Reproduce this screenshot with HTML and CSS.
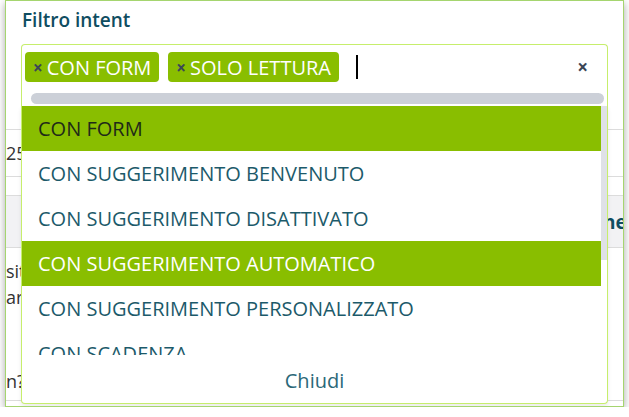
FILE: index.html
```html
<!DOCTYPE html>
<html lang="it">
<head>
<meta charset="utf-8">
<title>Filtro intent</title>
<link rel="stylesheet" href="styles.css">
</head>
<body>
<div class="modal">
  <h2 class="title">Filtro intent</h2>
  <div class="select">
    <div class="control">
      <div class="tags">
        <span class="tag"><span class="tag-x">×</span>CON FORM</span>
        <span class="tag"><span class="tag-x">×</span>SOLO LETTURA</span>
        <span class="caret"></span>
        <span class="clear">×</span>
      </div>
      <div class="hscroll"></div>
    </div>
    <div class="dropdown">
      <div class="list">
        <div class="options">
          <div class="opt selected">CON FORM</div>
          <div class="opt">CON SUGGERIMENTO BENVENUTO</div>
          <div class="opt">CON SUGGERIMENTO DISATTIVATO</div>
          <div class="opt hover">CON SUGGERIMENTO AUTOMATICO</div>
          <div class="opt">CON SUGGERIMENTO PERSONALIZZATO</div>
          <div class="opt">CON SCADENZA</div>
        </div>
        <div class="vscroll"><div class="thumb"></div></div>
      </div>
      <div class="footer">Chiudi</div>
    </div>
  </div>
  <div class="behind">
    <div class="pager"><span>25</span></div>
    <div class="thead"><span class="th">Azione</span></div>
    <div class="row r1">sito</div>
    <div class="row r2">area</div>
    <div class="row r3">n?</div>
  </div>
</div>
</body>
</html>
```

FILE: styles.css
```css
html, body {
  margin: 0;
  padding: 0;
  background: #fff;
  font-family: "Open Sans", "Noto Sans", sans-serif;
}
.modal {
  position: relative;
  margin-left: 5px;
  width: 619px;
  height: 407px;
  box-sizing: border-box;
  border: 1px solid #a5d56f;
  background: #fff;
  box-shadow: 0 3px 8px rgba(0, 0, 0, 0.35);
  overflow: hidden;
}
.title {
  margin: 0;
  padding: 6px 16px 0;
  font-size: 19px;
  line-height: 26px;
  font-weight: 600;
  color: #0f4d61;
}
.select {
  position: relative;
  margin: 11px 15px 0;
  z-index: 2;
}
.control {
  border: 1px solid #c6ee6c;
  border-bottom: none;
  border-radius: 4px 4px 0 0;
  padding: 7px 3px 2px 3px;
  background: #fff;
}
.tags {
  display: flex;
  align-items: center;
  height: 30px;
}
.tag {
  display: flex;
  align-items: center;
  height: 30px;
  padding: 0 8px 0 8px;
  margin-right: 9px;
  background: #89be00;
  color: #fff;
  border-radius: 4px;
  font-size: 20px;
}
.tag-x {
  color: #3b4656;
  font-size: 17px;
  font-weight: 700;
  margin-right: 4px;
}
.caret {
  width: 2px;
  height: 24px;
  background: #000;
  margin-left: 8px;
}
.clear {
  margin-left: auto;
  margin-right: 16px;
  color: #3b4656;
  font-size: 19px;
  font-weight: 700;
}
.hscroll {
  height: 11px;
  margin: 11px 0 0 6px;
  border-radius: 6px;
  background: #ccd0d8;
}
.dropdown {
  position: absolute;
  left: 0;
  right: 0;
  top: 100%;
  border: 1px solid #c6ee6c;
  border-top: none;
  border-radius: 0 0 4px 4px;
  background: #fff;
  box-shadow: 0 3px 4px rgba(0, 0, 0, 0.08);
}
.list {
  display: flex;
  height: 249px;
  overflow: hidden;
}
.options {
  flex: 1;
}
.opt {
  height: 45px;
  display: flex;
  align-items: center;
  padding-left: 16px;
  font-size: 20px;
  color: #1c5a6a;
  white-space: nowrap;
}
.opt.selected {
  background: #89be00;
  color: #1f2a18;
}
.opt.hover {
  background: #89be00;
  color: #fff;
}
.vscroll {
  width: 6px;
  background: #fff;
}
.thumb {
  height: 154px;
  background: #dfe1e7;
}
.footer {
  height: 48px;
  display: flex;
  align-items: center;
  justify-content: center;
  font-size: 20px;
  color: #2a6878;
  padding-top: 2px;
  box-sizing: border-box;
}
.behind {
  position: absolute;
  left: 0;
  right: 0;
  top: 107px;
  font-size: 18px;
  color: #333;
}
.pager {
  margin-top: 21px;
  height: 46px;
  border-top: 1px solid #dcdcdc;
  border-bottom: 1px solid #dcdcdc;
  display: flex;
  align-items: center;
}
.thead {
  margin-top: 18px;
  height: 51px;
  background: #f2f2f4;
  border-top: 1px solid #dcdcdc;
  border-bottom: 1px solid #dcdcdc;
  display: flex;
  align-items: center;
  font-weight: 700;
  font-size: 19px;
  color: #0f4d61;
  white-space: nowrap;
}
.th {
  margin-left: 557px;
}
.row {
  height: 26px;
  line-height: 26px;
}
.r1 { margin-top: 10px; }
.r3 { margin-top: 58px; border-bottom: 1px solid #dcdcdc; height: 32px; }
```
